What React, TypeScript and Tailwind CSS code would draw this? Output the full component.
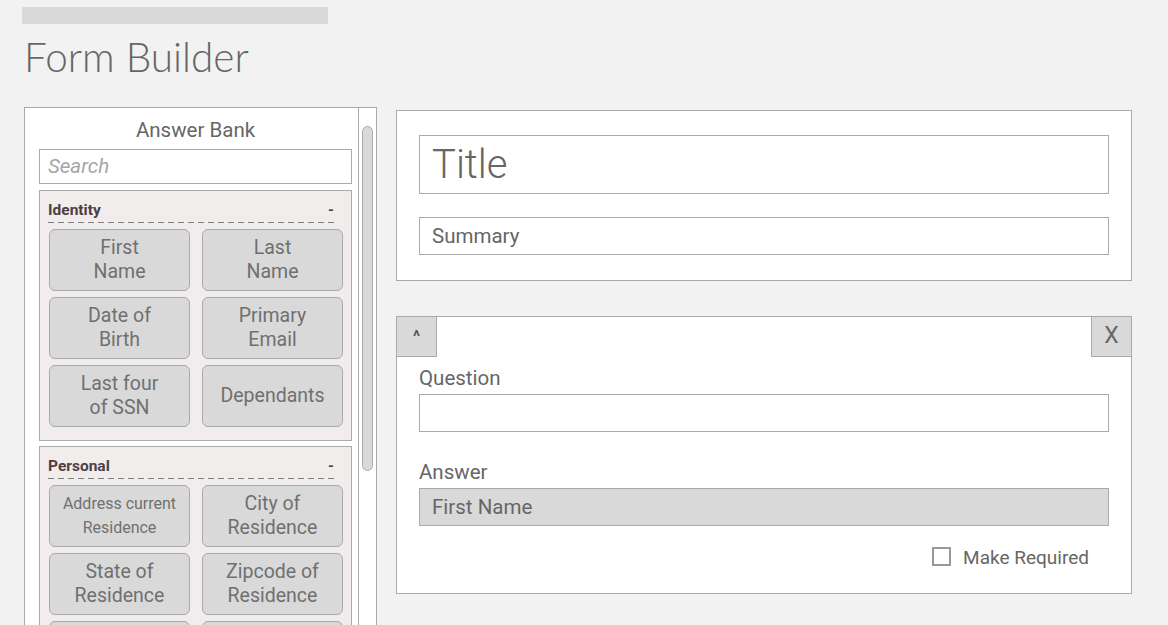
import { useState } from 'react';

type Section = { name: string; items: { label: string[]; small?: boolean }[] };

const sections: Section[] = [
  {
    name: 'Identity',
    items: [
      { label: ['First', 'Name'] },
      { label: ['Last', 'Name'] },
      { label: ['Date of', 'Birth'] },
      { label: ['Primary', 'Email'] },
      { label: ['Last four', 'of SSN'] },
      { label: ['Dependants'] },
    ],
  },
  {
    name: 'Personal',
    items: [
      { label: ['Address current', 'Residence'], small: true },
      { label: ['City of', 'Residence'] },
      { label: ['State of', 'Residence'] },
      { label: ['Zipcode of', 'Residence'] },
      // the last row is scrolled below the fold, only its top edge shows
      { label: [] },
      { label: [] },
    ],
  },
];

function BankSection({ section }: { section: Section }) {
  return (
    <div className="border border-[#aaaaaa] bg-[#f2eded] pb-[13px] pl-[8px] pr-[8px] pt-[9px]">
      <div className="mr-[5px] flex items-end justify-between pb-[2px]">
        <span className="text-[15.5px] font-bold leading-[20px] text-[#4d4045]">{section.name}</span>
        <span className="pr-[4px] text-[15px] font-bold leading-[20px] text-[#4d4045]">-</span>
      </div>
      <div className="mr-[5px] h-px bg-[repeating-linear-gradient(to_right,#808080_0px,#808080_6px,transparent_6px,transparent_10px)]" />
      <div className="mt-[6px] grid grid-cols-2 gap-x-[12px] gap-y-[6px] pl-[1px]">
        {section.items.map((item, index) => (
          <button
            key={index}
            type="button"
            className="flex h-[62px] flex-col items-center justify-center rounded-[6px] border border-[#aaaaaa] bg-[#d9d9d9] text-[#707070]"
          >
            {item.label.map((line) => (
              <span key={line} className={item.small ? 'text-[16px] leading-[24px]' : 'text-[19.5px] leading-[24px]'}>
                {line}
              </span>
            ))}
          </button>
        ))}
      </div>
    </div>
  );
}

export default function App() {
  const [required, setRequired] = useState(false);

  return (
    <div className="h-[625px] overflow-hidden bg-[#f2f2f2] font-['Roboto',sans-serif] text-[#666666]">
      <div className="ml-[22px] mt-[7px] h-[17px] w-[306px] bg-[#d9d9d9]" />
      <h1 className="ml-[24px] mt-[9px] font-['Lato',sans-serif] text-[40.5px] font-light leading-[48px] text-[#666666]">
        Form Builder
      </h1>

      <div className="ml-[24px] mt-[26px] flex items-start gap-[19px]">
        <aside className="flex h-[540px] w-[353px] border border-[#aaaaaa] bg-white">
          <div className="w-[333px] pl-[14px] pr-[6px]">
            <div className="pt-[9px] text-center text-[20.5px] leading-[26px]">Answer Bank</div>
            <div className="mt-[6px] flex h-[35px] items-center border border-[#aaaaaa] px-[8px] text-[20.5px] italic text-[#a6a6a6]">
              Search
            </div>
            <div className="mt-[6px] flex flex-col gap-[5px]">
              {sections.map((section) => (
                <BankSection key={section.name} section={section} />
              ))}
            </div>
          </div>
          <div className="flex w-[18px] justify-center border-l border-[#aaaaaa] pt-[18px]">
            <div className="h-[345px] w-[11px] rounded-full border border-[#aaaaaa] bg-[#d9d9d9]" />
          </div>
        </aside>

        <div className="mt-[3px] flex w-[736px] flex-col gap-[35px]">
          <section className="border border-[#aaaaaa] bg-white px-[22px] pb-[25px] pt-[24px]">
            <div className="flex h-[59px] items-center border border-[#aaaaaa] px-[12px] text-[40px] font-light text-[#666666]">
              Title
            </div>
            <div className="mt-[23px] flex h-[38px] items-center border border-[#aaaaaa] px-[12px] text-[20.5px]">
              Summary
            </div>
          </section>

          <section className="border border-[#aaaaaa] bg-white pb-[27px]">
            <div className="flex justify-between">
              <button
                type="button"
                className="flex h-[40px] w-[40px] items-center justify-center border-b border-r border-[#aaaaaa] bg-[#d9d9d9] text-[16px] font-bold text-[#555555]"
              >
                ^
              </button>
              <button
                type="button"
                className="flex h-[40px] w-[40px] items-center justify-center border-b border-l border-[#aaaaaa] bg-[#d9d9d9] text-[23px] text-[#666666]"
              >
                X
              </button>
            </div>
            <div className="px-[22px]">
              <div className="mt-[9px] text-[20.5px] leading-[25px]">Question</div>
              <div className="mt-[3px] h-[38px] border border-[#aaaaaa]" />
              <div className="mt-[28px] text-[20.5px] leading-[25px]">Answer</div>
              <div className="mt-[3px] flex h-[38px] items-center border border-[#aaaaaa] bg-[#d9d9d9] px-[12px] text-[20.5px]">
                First Name
              </div>
              <label className="mt-[20px] flex h-[20px] items-center justify-end gap-[12px] pr-[20px]">
                <input
                  type="checkbox"
                  checked={required}
                  onChange={(event) => setRequired(event.target.checked)}
                  className="h-[19px] w-[19px] appearance-none border-2 border-[#999999] bg-white"
                />
                <span className="pt-[3px] text-[19px] leading-[20px]">Make Required</span>
              </label>
            </div>
          </section>
        </div>
      </div>
    </div>
  );
}
